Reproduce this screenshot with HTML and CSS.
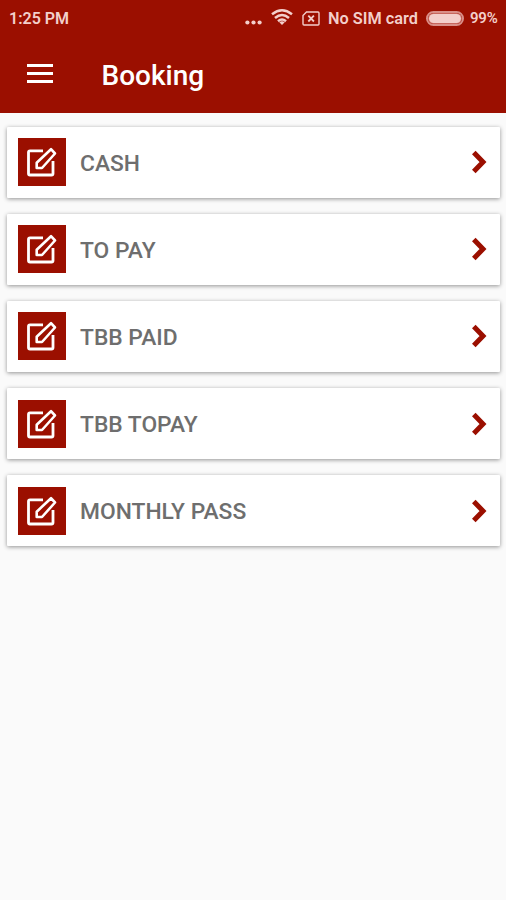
FILE: index.html
```html
<!DOCTYPE html>
<html lang="en">
<head>
    <title>Booking</title>
    <meta charset="UTF-8">
    <meta name="viewport" content="width=device-width, initial-scale=1.0">
    <link rel="stylesheet" href="styles.css">
</head>
<body>
    <svg class="defs" width="0" height="0">
        <symbol id="edit" viewBox="0 0 48 48">
            <path d="M25 12.800H12a1.500 1.500 0 0 0-1.500 1.500V35.500a1.500 1.500 0 0 0 1.500 1.500H33.500a1.500 1.500 0 0 0 1.500-1.500V23" fill="none" stroke="currentColor" stroke-width="2.800"/>
            <path d="M18.700 30v-5.300L33 11.200l4 4.300L24 30z" fill="none" stroke="currentColor" stroke-width="2.600" stroke-linejoin="round"/>
        </symbol>
        <symbol id="arrow" viewBox="0 0 16 24">
            <path d="M2.800 2.500L12 12L2.800 21.500" fill="none" stroke="currentColor" stroke-width="5"/>
        </symbol>
    </svg>
    <header>
        <div class="status">
            <span class="time">1:25 PM</span>
            <svg class="dots" width="18" height="6" viewBox="0 0 18 6">
                <circle cx="2.400" cy="2.500" r="2.100"/>
                <circle cx="8.500" cy="2.500" r="2.100"/>
                <circle cx="14.600" cy="2.500" r="2.100"/>
            </svg>
            <svg class="wifi" width="22" height="17" viewBox="0 0 22 17">
                <path d="M1 5.300Q11-2.700 21 5.300M4 9Q11 3 18 9M7 12.300Q11 8.800 15 12.300" fill="none" stroke="currentColor" stroke-width="2.500"/>
                <path d="M8.300 13.200Q11 11.200 13.700 13.200L11 16z" fill="currentColor"/>
            </svg>
            <svg class="sim" width="18" height="15" viewBox="0 0 18 15">
                <path d="M4.500 1H16a1 1 0 0 1 1 1V13a1 1 0 0 1-1 1H2A1 1 0 0 1 1 13V4.500z" fill="none" stroke="currentColor" stroke-width="1.400"/>
                <path d="M6.300 4.700l5.600 5.800M11.900 4.700l-5.600 5.800" stroke="currentColor" stroke-width="1.800"/>
            </svg>
            <span class="carrier">No SIM card</span>
            <div class="battery"><div class="level"></div></div>
            <span class="percent">99%</span>
        </div>
        <div class="toolbar">
            <div class="menu">
                <span></span>
                <span></span>
                <span></span>
            </div>
            <h1>Booking</h1>
        </div>
    </header>
    <section class="list">
        <div class="card">
            <svg class="icon"><use href="#edit"/></svg>
            <h3>CASH</h3>
            <svg class="arrow"><use href="#arrow"/></svg>
        </div>
        <div class="card">
            <svg class="icon"><use href="#edit"/></svg>
            <h3>TO PAY</h3>
            <svg class="arrow"><use href="#arrow"/></svg>
        </div>
        <div class="card">
            <svg class="icon"><use href="#edit"/></svg>
            <h3>TBB PAID</h3>
            <svg class="arrow"><use href="#arrow"/></svg>
        </div>
        <div class="card">
            <svg class="icon"><use href="#edit"/></svg>
            <h3>TBB TOPAY</h3>
            <svg class="arrow"><use href="#arrow"/></svg>
        </div>
        <div class="card">
            <svg class="icon"><use href="#edit"/></svg>
            <h3>MONTHLY PASS</h3>
            <svg class="arrow"><use href="#arrow"/></svg>
        </div>
    </section>
</body>
</html>
```
FILE: styles.css
```css
* {
    box-sizing: border-box;
}
body {
    font-family: Roboto, sans-serif;
    margin: 0;
    min-height: 100vh;
    background-color: #fafafa;
}
.defs {
    display: block;
}
header {
    height: 112.5px;
    background-color: #9b0f00;
    color: white;
}
.status {
    display: flex;
    align-items: center;
    height: 36px;
    padding: 0 8px 0 9px;
    font-size: 16px;
    font-weight: 600;
    color: #f3cfcb;
    white-space: nowrap;
}
.time {
    width: 236px;
}
.dots {
    margin-top: 9px;
    fill: currentColor;
}
.wifi {
    margin: -2px 0 0 8px;
}
.sim {
    margin-left: 9px;
}
.carrier {
    width: 91px;
    margin-left: 8px;
    font-size: 16.300px;
}
.battery {
    width: 38px;
    height: 15px;
    margin-left: 7px;
    padding: 1px;
    border: 2px solid #d98f88;
    border-radius: 8px;
}
.level {
    height: 100%;
    border-radius: 5px;
    background-color: #f3cfcb;
    box-shadow: 0 0 0 1px #c8675e;
}
.percent {
    margin-left: 6px;
    font-size: 15px;
    letter-spacing: -0.2px;
}
.toolbar {
    display: flex;
    align-items: center;
    height: 76px;
    padding-left: 27px;
}
.menu {
    display: flex;
    flex-direction: column;
    gap: 5px;
    width: 26px;
    margin-top: -2px;
}
.menu span {
    height: 3px;
    background-color: white;
}
h1 {
    margin: 3px 0 0 48.5px;
    font-size: 28px;
    font-weight: 550;
}
.list {
    display: flex;
    flex-direction: column;
    gap: 16.2px;
    padding: 14px 6px 20px 7px;
}
.card {
    display: flex;
    align-items: center;
    height: 71px;
    padding: 0 13px 0 11px;
    border-radius: 1px;
    background-color: white;
    box-shadow: 0 1px 4px rgba(0, 0, 0, 0.42);
}
.icon {
    width: 48px;
    height: 48px;
    background-color: #9b0f00;
    color: white;
}
.card h3 {
    flex: 1;
    margin: 2px 0 0 14px;
    font-size: 22.800px;
    font-weight: 500;
    color: #6e6e6e;
}
.arrow {
    width: 16px;
    height: 24px;
    color: #9b0f00;
}
```
